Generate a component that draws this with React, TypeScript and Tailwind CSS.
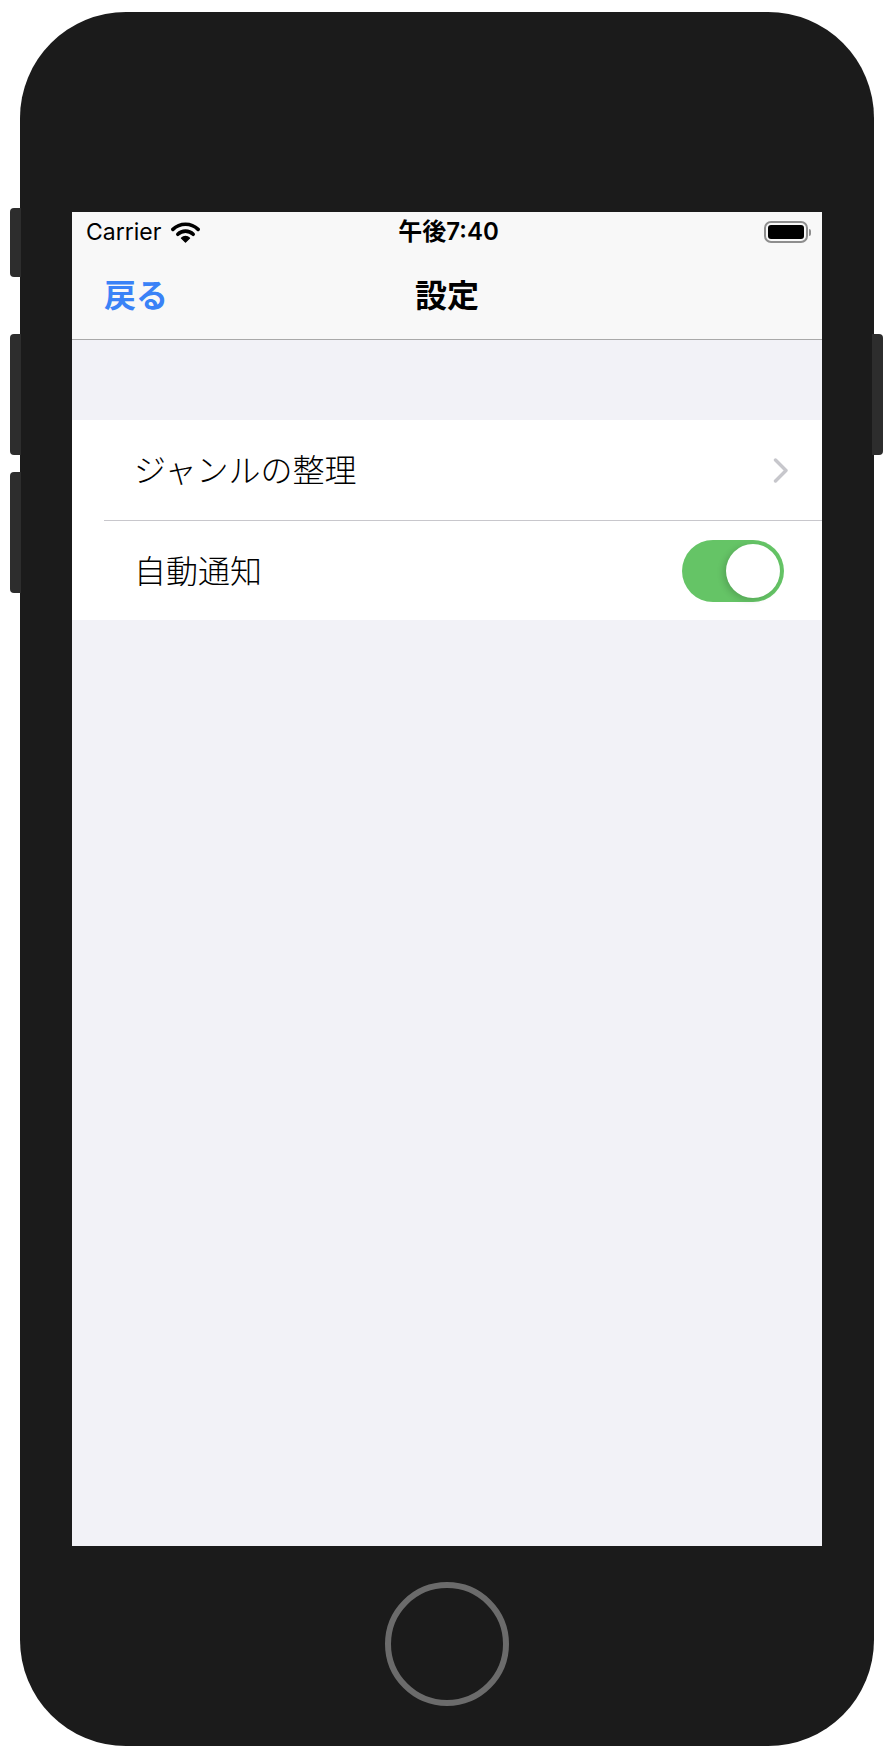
import React from "react";

const jp = { fontFamily: '"Noto Sans CJK JP", "Noto Sans", sans-serif' };
const mix = { fontFamily: 'Inter, "Noto Sans CJK JP", sans-serif' };

function Wifi() {
  return (
    <svg width="29" height="21" viewBox="0 0 29 21">
      <path d="M1.9 7.4 A18 18 0 0 1 27.1 7.4" fill="none" stroke="#000" strokeWidth="3.6" strokeLinecap="round" />
      <path d="M6.8 12.3 A11 11 0 0 1 22.2 12.3" fill="none" stroke="#000" strokeWidth="3.6" strokeLinecap="round" />
      <path d="M14.5 20.2 L10.4 16.1 A5.8 5.8 0 0 1 18.6 16.1 Z" fill="#000" stroke="#000" strokeWidth="1.2" strokeLinejoin="round" />
    </svg>
  );
}

function Battery() {
  return (
    <div className="flex items-center">
      <div className="w-[44px] h-[22px] rounded-[7px] border-2 border-[#8e8e8e] p-[2px]">
        <div className="w-full h-full rounded-[3px] bg-black" />
      </div>
      <div className="w-[2px] h-[7px] rounded-r-[2px] bg-[#8e8e8e] ml-[1px]" />
    </div>
  );
}

function Chevron() {
  return (
    <svg width="16" height="25" viewBox="0 0 16 25">
      <path d="M2.5 2 L13 12.5 L2.5 23" fill="none" stroke="#c7c7cc" strokeWidth="3.4" strokeLinecap="round" strokeLinejoin="round" />
    </svg>
  );
}

function Toggle() {
  return (
    <div className="w-[102px] h-[62px] rounded-full bg-[#65c466] flex items-center justify-end pr-[4px]">
      <div className="w-[54px] h-[54px] rounded-full bg-white shadow-[-3px_2px_6px_rgba(0,0,0,0.15)]" />
    </div>
  );
}

export default function App() {
  return (
    <div className="w-[894px] h-[1748px] bg-white pt-[12px] pl-[20px]">
      <div className="relative w-[854px] h-[1734px] rounded-[106px] bg-[#1b1b1b] flex flex-col items-center pt-[200px]">
        <div className="absolute left-[-10px] top-[196px] w-[11px] h-[69px] rounded-l-[4px] bg-[#2d2d2d]" />
        <div className="absolute left-[-10px] top-[322px] w-[11px] h-[121px] rounded-l-[4px] bg-[#2d2d2d]" />
        <div className="absolute left-[-10px] top-[460px] w-[11px] h-[121px] rounded-l-[4px] bg-[#2d2d2d]" />
        <div className="absolute right-[-9px] top-[322px] w-[11px] h-[121px] rounded-r-[4px] bg-[#2d2d2d]" />

        <div className="w-[750px] h-[1334px] bg-[#f2f2f7] flex flex-col">
          <div className="bg-[#f8f8f8] border-b border-[#a9a9a9]">
            <div className="h-[40px] flex items-center justify-between pl-[14px] pr-[11px]">
              <div className="flex items-center gap-[10px] w-[200px]">
                <span className="text-[23px] text-black leading-none" style={mix}>Carrier</span>
                <Wifi />
              </div>
              <span className="text-[24px] font-semibold text-black leading-none" style={mix}>午後7:40</span>
              <div className="w-[200px] flex justify-end">
                <Battery />
              </div>
            </div>
            <div className="h-[87px] flex items-center px-[32px] pb-[5px]">
              <span className="w-[140px] text-[32px] font-bold text-[#3a82f7] leading-none" style={jp}>戻る</span>
              <span className="flex-1 text-center text-[32px] font-bold text-black leading-none" style={jp}>設定</span>
              <span className="w-[140px]" />
            </div>
          </div>

          <div className="h-[80px]" />

          <div className="bg-white">
            <div className="h-[100px] flex items-center justify-between pl-[62px] pr-[33px]">
              <span className="text-[32px] font-light text-black leading-none mb-[5px]" style={jp}>ジャンルの整理</span>
              <Chevron />
            </div>
            <div className="ml-[32px] h-px bg-[#c8c7cc]" />
            <div className="h-[99px] flex items-center justify-between pl-[62px] pr-[38px]">
              <span className="text-[32px] font-light text-black leading-none mb-[4px]" style={jp}>自動通知</span>
              <Toggle />
            </div>
          </div>
        </div>

        <div className="mt-[36px] w-[124px] h-[124px] rounded-full border-[6px] border-[#6b6b6b]" />
      </div>
    </div>
  );
}
